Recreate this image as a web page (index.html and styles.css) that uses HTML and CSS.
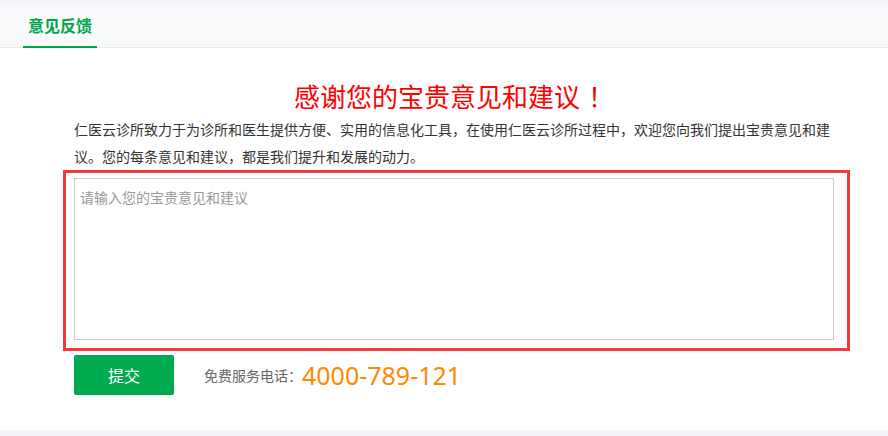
FILE: index.html
```html
<!DOCTYPE html>
<html lang="zh-CN">
<head>
    <meta charset="UTF-8">
    <meta name="viewport" content="width=device-width, initial-scale=1.0">
    <title>意见反馈</title>
    <link rel="stylesheet" href="styles.css">
</head>
<body>
    <div class="panel">
        <div class="tabs">
            <span class="tab">意见反馈</span>
        </div>

        <div class="content">
            <h2 class="title">感谢您的宝贵意见和建议<span class="bang">！</span></h2>
            <p class="intro">仁医云诊所致力于为诊所和医生提供方便、实用的信息化工具，在使用仁医云诊所过程中，欢迎您向我们提出宝贵意见和建议。您的每条意见和建议，都是我们提升和发展的动力。</p>

            <!-- 红框标注的输入区域 -->
            <div class="mark">
                <textarea class="feedback" placeholder="请输入您的宝贵意见和建议"></textarea>
            </div>

            <div class="actions">
                <button class="btn-submit">提交</button>
                <span class="hotline">免费服务电话：<span class="phone">4000-789-121</span></span>
            </div>
        </div>
    </div>
</body>
</html>
```

FILE: styles.css
```css
* {
    margin: 0;
    padding: 0;
    box-sizing: border-box;
    font-family: "Noto Sans CJK SC", "Noto Sans", sans-serif;
}
body {
    background: #f3f4f7;
    width: 888px;
    height: 436px;
    overflow: hidden;
}
.panel {
    margin-top: 3px;
    height: 427px;
    background: #fff;
}

/* 顶部标签栏 */
.tabs {
    height: 45px;
    background: #f8f9fb;
    border-bottom: 1px solid #e6e8eb;
    padding-left: 23px;
}
.tab {
    display: inline-block;
    width: 74px;
    height: 45px;
    line-height: 44px;
    text-align: center;
    font-size: 16px;
    font-weight: bold;
    color: #00a54c;
    border-bottom: 2px solid #00a54c;
}

.content {
    padding: 33px 54px 0 74px;
}
.title {
    font-size: 26px;
    line-height: 30px;
    font-weight: normal;
    color: #ff0000;
    text-align: center;
}
.bang {
    margin-left: 8px;
}
.intro {
    margin-top: 5px;
    font-size: 14px;
    line-height: 27px;
    color: #333;
}

.mark {
    margin-left: -11px;
    width: 787px;
    border: 3px solid #f23a3a;
    padding: 5px 12px 8px 8px;
}
.feedback {
    display: block;
    width: 760px;
    height: 162px;
    border: 1px solid #cccccc;
    padding: 8px 5px;
    font-size: 14px;
    line-height: 20px;
    color: #333;
    resize: none;
    outline: none;
}
.feedback::placeholder {
    color: #999;
}

.actions {
    display: flex;
    align-items: center;
    margin-top: 4px;
}
.btn-submit {
    width: 100px;
    height: 40px;
    border: none;
    border-radius: 2px;
    background: #00aa4f;
    color: #fff;
    font-size: 16px;
    cursor: pointer;
}
.hotline {
    margin-left: 30px;
    font-size: 14px;
    color: #666;
    display: flex;
    align-items: center;
}
.phone {
    font-family: "Noto Sans", sans-serif;
    font-size: 25px;
    color: #ff8a00;
}
```
